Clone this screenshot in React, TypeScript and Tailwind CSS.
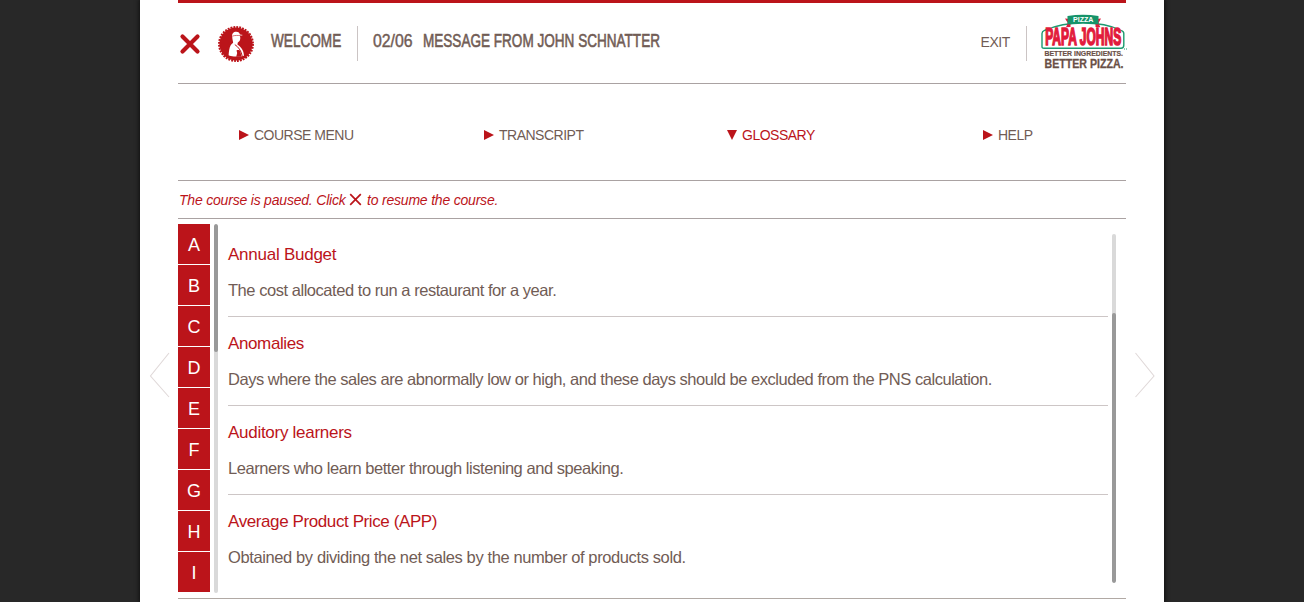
import React from "react";

const letters = ["A", "B", "C", "D", "E", "F", "G", "H", "I"];

const terms = [
  { term: "Annual Budget", text: "The cost allocated to run a restaurant for a year.", tracking: "tracking-[-0.25px]", body: "tracking-[-0.46px]" },
  {
    term: "Anomalies",
    text: "Days where the sales are abnormally low or high, and these days should be excluded from the PNS calculation.",
    tracking: "tracking-[-0.38px]",
    body: "tracking-[-0.468px]",
  },
  { term: "Auditory learners", text: "Learners who learn better through listening and speaking.", tracking: "tracking-[-0.28px]", body: "tracking-[-0.45px]" },
  { term: "Average Product Price (APP)", text: "Obtained by dividing the net sales by the number of products sold.", tracking: "tracking-[-0.4px]", body: "tracking-[-0.39px]" },
];

function Badge() {
  return (
    <svg width="38" height="38" viewBox="0 0 38 38" className="block">
      <circle cx="19" cy="19" r="16.6" fill="#bb141a" />
      <circle cx="19" cy="19" r="17" fill="none" stroke="#bb141a" strokeWidth="1.9" strokeDasharray="1.85 1.11" />
      <path
        d="M15.2 11.5C14.8 8.4 16.6 6.7 19.2 6.7C21.6 6.7 22.7 8 22.9 9.6L26 10L23 10.9C23.4 12.3 23.5 14.2 22.7 15.7C22.2 16.6 21.2 17 20.8 17.6L20.4 19.4C24 21.6 26.8 25.4 27 30.7C23.9 31.6 20.2 31.8 16.8 31.4C14.6 31.1 12.9 30.8 11.6 30.2C11.9 26.5 12.3 22.3 13.7 20.2C14.4 19.1 15.7 18.4 16.1 17.8C16.1 16.1 15.3 14.5 15.2 11.5Z"
        fill="#fff"
      />
      <path d="M15.4 11.1C18 10.3 21 10.2 24 10.8" fill="none" stroke="#bb141a" strokeWidth="0.6" />
      <path d="M17.8 19.6C21 21.6 24.4 25.6 25.2 31.2" fill="none" stroke="#bb141a" strokeWidth="1" />
      <path d="M19.5 25.5C21 24.6 22.6 25 23.4 26.2L24.4 31.7H19.2L20.2 28Z" fill="#bb141a" />
    </svg>
  );
}

function Logo() {
  return (
    <svg width="86" height="60" viewBox="0 0 86 60" className="block" fontFamily="'Liberation Sans', sans-serif" fontWeight="bold">
      <path
        d="M1 33V19.5C1 18 1.8 17 3.5 16.3C15 11.5 26 9 42 9C58 9 70 11.5 80 16.3C81.9 17 82.8 18 82.8 19.5V31C82.8 33.4 81.8 34.3 80 34.3H3C1.6 34.3 1 33.8 1 33Z"
        fill="#fff"
        stroke="#1b9a70"
        strokeWidth="1.4"
      />
      <path d="M24 4.5L29.5 5V13L25 13.2L26.8 9Z M60 4.5L54.5 5V13L59.3 13.2L57.5 9Z" fill="#e21b3c" />
      <path d="M26.5 2C37 0.3 47 0.3 57.5 2V10.6C47 8.6 37 8.6 26.5 10.6Z" fill="#16936a" />
      <text x="32" y="7.6" fontSize="6.4" textLength="20.5" lengthAdjust="spacingAndGlyphs" fill="#fff">PIZZA</text>
      <text x="4.2" y="30.8" fontSize="24" textLength="76" lengthAdjust="spacingAndGlyphs" fill="#e21b3c" stroke="#e21b3c" strokeWidth="1.7">PAPA JOHNS</text>
      <path d="M83 35H84M85 35H86" stroke="#1b9a70" strokeWidth="1.2" />
      <text x="3.5" y="41.6" fontSize="7.5" textLength="78.5" lengthAdjust="spacingAndGlyphs" fill="#6a4f46" stroke="#6a4f46" strokeWidth="0.2">BETTER INGREDIENTS.</text>
      <text x="3.5" y="53.8" fontSize="12.4" textLength="79" lengthAdjust="spacingAndGlyphs" fill="#6a4f46" stroke="#6a4f46" strokeWidth="0.3">BETTER PIZZA.</text>
    </svg>
  );
}

function Arrow({ down = false }: { down?: boolean }) {
  return (
    <svg width="10" height="10" viewBox="0 0 10 10" className="block shrink-0">
      <path d={down ? "M0 0H10L5 10Z" : "M0 0L10 5L0 10Z"} fill="#bb141a" />
    </svg>
  );
}

export default function App() {
  return (
    <div className="flex h-[602px] w-full justify-center overflow-hidden bg-[#282828] font-['Liberation_Sans',Arial,sans-serif] text-[#715c55]">
      <div className="flex h-full w-[1024px] bg-white shadow-[0_0_4px_1px_#101010]">
        <div className="w-[38px] shrink-0 pt-[352px] pl-[9px]">
          <svg width="22" height="46" viewBox="0 0 22 46" className="block">
            <path d="M20 1L1.5 24L20 45" fill="none" stroke="#e0d9d9" strokeWidth="1.1" />
          </svg>
        </div>

        <main className="flex w-[948px] shrink-0 flex-col">
          <header className="flex h-[84px] shrink-0 items-start border-t-[3px] border-b border-t-[#bb141a] border-b-[#aaa2a2]">
            <svg width="22" height="22" viewBox="0 0 22 22" className="mt-[30px] ml-px block">
              <path d="M3.5 3.5L18.5 18.5M18.5 3.5L3.5 18.5" stroke="#bb141a" strokeWidth="4.2" strokeLinecap="round" />
            </svg>
            <div className="mt-[22px] ml-4">
              <Badge />
            </div>
            <div className="mt-[26px] ml-4 flex h-6 w-[86px] items-center text-lg leading-6 whitespace-nowrap">
              <span className="origin-left scale-x-[0.755] [-webkit-text-stroke:0.6px_#715c55]">WELCOME</span>
            </div>
            <div className="mt-[23px] h-[35px] w-px bg-[#cbc4c4]" />
            <div className="mt-[26px] ml-[15px] flex h-6 w-[50px] items-center text-lg leading-6 whitespace-nowrap">
              <span className="origin-left scale-x-[0.88] [-webkit-text-stroke:0.45px_#715c55]">02/06</span>
            </div>
            <div className="mt-[26px] flex h-6 w-[240px] items-center text-lg leading-6 whitespace-nowrap">
              <span className="origin-left scale-x-[0.753] [-webkit-text-stroke:0.6px_#715c55]">MESSAGE FROM JOHN SCHNATTER</span>
            </div>
            <div className="mt-[29px] ml-auto text-sm tracking-[-0.4px]">EXIT</div>
            <div className="mt-[23px] ml-4 h-[35px] w-px bg-[#cbc4c4]" />
            <div className="mt-[11px] -mr-px ml-[14px]">
              <Logo />
            </div>
          </header>

          <nav className="flex h-[97px] shrink-0 items-start border-b border-[#aaa2a2] pt-[41px] text-sm leading-5 tracking-[-0.5px]">
            <div className="flex w-[245px] items-center gap-[5px] pl-[61px]"><Arrow />COURSE MENU</div>
            <div className="flex w-[245px] items-center gap-[5px] pl-[61px]"><Arrow />TRANSCRIPT</div>
            <div className="flex w-[245px] items-center gap-[5px] pl-[59px] text-[#bb141a]"><Arrow down />GLOSSARY</div>
            <div className="flex items-center gap-[5px] pl-[70px]"><Arrow />HELP</div>
          </nav>

          <div className="flex h-[38px] shrink-0 items-center border-b border-[#aaa2a2] pl-px text-sm tracking-[-0.2px] text-[#bb141a] italic">
            <span className="w-[170px] whitespace-nowrap">The course is paused. Click</span>
            <svg width="13" height="13" viewBox="0 0 13 13" className="block">
              <path d="M1.2 1.2L11.8 11.8M11.8 1.2L1.2 11.8" stroke="#bb141a" strokeWidth="1.7" />
            </svg>
            <span className="ml-[5px]">to resume the course.</span>
          </div>

          <section className="flex h-[380px] shrink-0 border-b border-[#b1a9a4] pt-[5px]">
            <ul className="flex w-8 flex-col gap-px text-lg text-white">
              {letters.map((l) => (
                <li key={l} className="flex h-10 items-center justify-center bg-[#bb141a] pt-0.5">{l}</li>
              ))}
            </ul>
            <div className="ml-1 h-[369px] w-1 overflow-hidden rounded-full bg-[#d9d9d9]">
              <div className="h-32 rounded-full bg-[#999]" />
            </div>
            <div className="ml-2.5 w-[880px] pt-1">
              {terms.map((t, i) => (
                <article key={t.term} className={i < 3 ? "border-b border-[#cdc6c6] pt-[9px] pb-2" : "pt-[9px] pb-2"}>
                  <h2 className={`text-[17px] leading-9 text-[#bb141a] ${t.tracking}`}>{t.term}</h2>
                  <p className={`text-[16.5px] leading-[35px] whitespace-nowrap ${t.body}`}>{t.text}</p>
                </article>
              ))}
            </div>
            <div className="mt-2.5 ml-1 h-[349px] w-1 overflow-hidden rounded-full bg-[#d9d9d9] pt-[79px]">
              <div className="h-[270px] rounded-full bg-[#999]" />
            </div>
          </section>
        </main>

        <div className="w-[38px] shrink-0 pt-[352px] pl-2">
          <svg width="22" height="46" viewBox="0 0 22 46" className="block">
            <path d="M1.5 1L20 24L1.5 45" fill="none" stroke="#e0d9d9" strokeWidth="1.1" />
          </svg>
        </div>
      </div>
    </div>
  );
}
